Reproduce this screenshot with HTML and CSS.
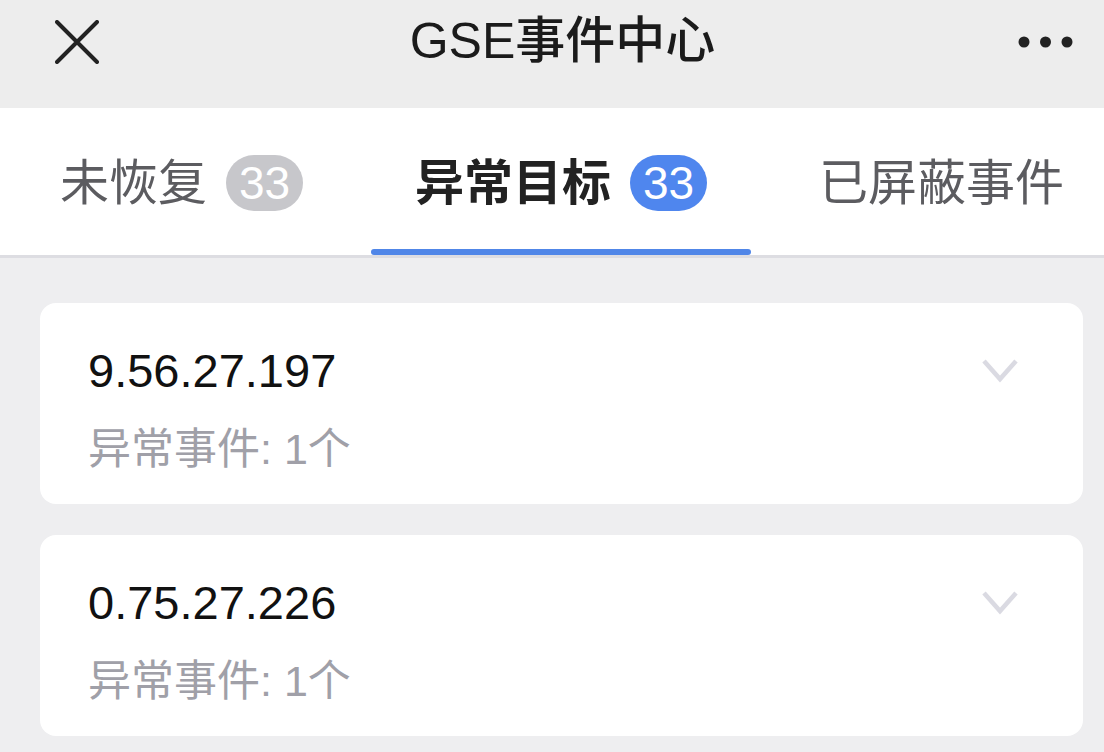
FILE: index.html
```html
<!DOCTYPE html>
<html lang="zh-CN">
<head>
<meta charset="utf-8">
<title>GSE事件中心</title>
<link rel="stylesheet" href="styles.css">
</head>
<body>
<div class="page">
  <header class="navbar">
    <svg class="nav-close" width="44" height="44" viewBox="0 0 44 44">
      <path d="M2 2 L42 42 M42 2 L2 42" stroke="#222" stroke-width="4" stroke-linecap="round" fill="none"/>
    </svg>
    <div class="nav-title">GSE事件中心</div>
    <svg class="nav-more" width="60" height="12" viewBox="0 0 60 12">
      <circle cx="8" cy="6" r="5.5" fill="#222"/>
      <circle cx="29.5" cy="6" r="5.5" fill="#222"/>
      <circle cx="51" cy="6" r="5.5" fill="#222"/>
    </svg>
  </header>

  <nav class="tabs">
    <div class="tab">
      <span class="tab-label">未恢复</span>
      <span class="badge badge-grey">33</span>
    </div>
    <div class="tab tab-active">
      <span class="tab-label">异常目标</span>
      <span class="badge badge-blue">33</span>
      <span class="tab-indicator"></span>
    </div>
    <div class="tab">
      <span class="tab-label">已屏蔽事件</span>
    </div>
  </nav>

  <main class="list">
    <section class="card">
      <div class="card-head">
        <div class="card-title">9.56.27.197</div>
        <svg class="chevron" width="38" height="26" viewBox="0 0 38 26">
          <path d="M3 3 L19 21 L35 3" stroke="#dadae2" stroke-width="4.5" fill="none"/>
        </svg>
      </div>
      <div class="card-sub">异常事件: 1个</div>
    </section>
    <section class="card">
      <div class="card-head">
        <div class="card-title">0.75.27.226</div>
        <svg class="chevron" width="38" height="26" viewBox="0 0 38 26">
          <path d="M3 3 L19 21 L35 3" stroke="#dadae2" stroke-width="4.5" fill="none"/>
        </svg>
      </div>
      <div class="card-sub">异常事件: 1个</div>
    </section>
  </main>
</div>
</body>
</html>
```

FILE: styles.css
```css
* { box-sizing: border-box; }
html, body {
  margin: 0;
  padding: 0;
  width: 1104px;
  height: 752px;
  overflow: hidden;
  background: #eeeef0;
  font-family: "Liberation Sans", "Noto Sans CJK SC", sans-serif;
}
.page {
  display: flex;
  flex-direction: column;
  height: 752px;
}
.navbar {
  height: 108px;
  background: #ededed;
  display: flex;
  align-items: flex-start;
  justify-content: space-between;
  padding: 20px 28px 0 55px;
  flex-shrink: 0;
}
.nav-close { display: block; }
.nav-title {
  font-size: 50px;
  line-height: 48px;
  font-weight: 500;
  color: #1b1b1b;
  margin-top: -3px;
  margin-left: 10px;
}
.nav-more {
  display: block;
  margin-top: 16px;
}
.tabs {
  height: 150px;
  background: #ffffff;
  border-bottom: 3px solid #dddde2;
  display: flex;
  align-items: center;
  gap: 112px;
  padding: 3px 0 0 60px;
  flex-shrink: 0;
  overflow: hidden;
}
.tab {
  display: flex;
  align-items: center;
  position: relative;
  height: 100%;
  white-space: nowrap;
}
.tab-label {
  font-size: 49px;
  line-height: 56px;
  color: #5c5c60;
}
.tab-active .tab-label {
  color: #222222;
  font-weight: 700;
}
.badge {
  margin-left: 19px;
  width: 77px;
  height: 56px;
  border-radius: 28px;
  display: flex;
  align-items: center;
  justify-content: center;
  color: #ffffff;
  font-size: 46px;
  line-height: 56px;
}
.badge-grey { background: #c7c7cb; }
.badge-blue { background: #4f86ee; }
.tab-indicator {
  position: absolute;
  left: -44px;
  right: -44px;
  bottom: 0;
  height: 6px;
  border-radius: 3px;
  background: #5086e8;
}
.list {
  display: flex;
  flex-direction: column;
  gap: 31px;
  padding: 45px 21px 0 40px;
}
.card {
  background: #ffffff;
  border-radius: 16px;
  padding: 38px 64px 29px 48px;
  height: 201px;
}
.card-head {
  display: flex;
  align-items: center;
  justify-content: space-between;
  height: 60px;
}
.card-title {
  font-size: 47px;
  line-height: 60px;
  color: #111111;
}
.chevron { display: block; }
.card-sub {
  margin-top: 22px;
  font-size: 43px;
  line-height: 52px;
  color: #a0a0a8;
}
```
